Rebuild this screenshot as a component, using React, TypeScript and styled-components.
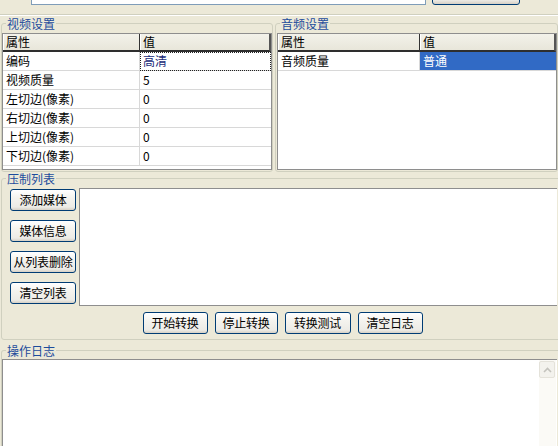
import React from "react";
import styled, { createGlobalStyle } from "styled-components";

const Global = createGlobalStyle`
  html, body {
    margin: 0;
    padding: 0;
    background: #ece9d8;
  }
  body {
    font-family: "Noto Sans CJK SC", "DejaVu Sans", sans-serif;
    font-size: 12px;
    color: #000;
  }
`;

const Window = styled.div`
  width: 558px;
  height: 446px;
  overflow: hidden;
  background: #ece9d8;
  display: flex;
  flex-direction: column;
  padding-left: 1px;
  box-sizing: border-box;

  & > * {
    flex-shrink: 0;
  }
`;

const TopStrip = styled.div`
  height: 5px;
  overflow: hidden;
  display: flex;
  align-items: flex-end;
  gap: 6px;
  padding-left: 30px;
`;

const PathInput = styled.div`
  width: 395px;
  height: 20px;
  flex: none;
  background: #fff;
  border: 1px solid #7f9db9;
  box-sizing: border-box;
`;

const BrowseButton = styled.div`
  width: 88px;
  height: 22px;
  flex: none;
  border: 1px solid #003c74;
  border-radius: 3px;
  box-sizing: border-box;
  background: linear-gradient(#fff, #ecebe6 80%, #d6d0c5);
`;

const Separator = styled.div`
  margin: 9px 0 0 -1px;
  height: 0;
  border-top: 1px solid #d0d0bf;
  border-bottom: 1px solid #fff;
`;

const SettingsRow = styled.div`
  display: grid;
  grid-template-columns: 272px 283px;
  gap: 2px;
  margin-top: 1px;
`;

const Group = styled.fieldset<{ $bleed?: boolean }>`
  margin: 0 ${(p) => (p.$bleed ? "-4px" : "0")} 0 0;
  padding: 0 ${(p) => (p.$bleed ? "4px" : "0")} 1px 0;
  min-width: 0;
  border: 1px solid #d0d0bf;
  border-radius: 3px;
  box-sizing: border-box;
`;

const Legend = styled.legend`
  margin-left: 4px;
  padding: 0 1px;
  font-size: 12px;
  line-height: 13px;
  height: 13px;
  color: #1d4c9c;
`;

const PropTable = styled.div<{ $first: number; $gapLeft?: number }>`
  margin: 3px 0 0 ${(p) => p.$gapLeft ?? 0}px;
  height: 137px;
  background: #fff;
  border: 1px solid #8e8e8e;
  box-sizing: border-box;
  display: grid;
  grid-template-columns: ${(p) => p.$first}px 1fr;
  grid-auto-rows: 19px;
  grid-template-rows: 18px;
  align-content: start;
`;

const HeadCell = styled.div<{ $last?: boolean }>`
  background: linear-gradient(#f3f2ea, #e8e6da);
  border-bottom: 2px solid #2e2e2e;
  border-right: ${(p) => (p.$last ? "2px solid #555" : "1px solid #333")};
  box-shadow: inset 1px 0 #fff;
  line-height: 16px;
  padding-left: 3px;
  font-size: 12px;
  overflow: hidden;
`;

const Cell = styled.div<{ $variant?: "focus" | "selected"; $last?: boolean }>`
  border-bottom: 1px solid #d8d8d8;
  border-right: ${(p) => (p.$last ? "none" : "1px solid #d8d8d8")};
  line-height: 18px;
  padding-left: 3px;
  font-size: 12px;
  white-space: nowrap;
  overflow: hidden;
  box-sizing: border-box;
  color: ${(p) =>
    p.$variant === "selected" ? "#fff" : p.$variant === "focus" ? "#1b2c78" : "#000"};
  background: ${(p) => (p.$variant === "selected" ? "#316ac5" : "transparent")};
  outline: ${(p) => (p.$variant === "focus" ? "1px dotted #222" : "none")};
  outline-offset: -1px;
`;

const ListGroupBody = styled.div`
  display: grid;
  grid-template-columns: 66px 1fr;
  gap: 3px;
  padding: 3px 0 0 8px;
`;

const ButtonColumn = styled.div`
  display: flex;
  flex-direction: column;
  gap: 9px;
  padding-top: 1px;
`;

const Button = styled.button<{ $w?: number }>`
  width: ${(p) => p.$w ?? 66}px;
  height: 22px;
  padding: 0;
  border: 1px solid #003c74;
  border-radius: 3px;
  background: linear-gradient(#ffffff, #f4f3ee 40%, #ecebe6 85%, #d6d0c5);
  font-family: "Noto Sans CJK SC", "DejaVu Sans", sans-serif;
  font-size: 12px;
  color: #000;
  line-height: 20px;
  white-space: nowrap;
  letter-spacing: -0.2px;
`;

const MediaList = styled.div`
  height: 118px;
  background: #fff;
  border: 1px solid #8e8e8e;
  border-right: none;
  box-sizing: border-box;
`;

const ActionRow = styled.div`
  display: flex;
  justify-content: center;
  gap: 7px;
  padding: 6px 0 4px 6px;
`;

const LogGroup = styled(Group)`
  margin-top: 4px;
  padding-bottom: 0;
  border-bottom: none;
`;

const LogBox = styled.div`
  margin-top: 2px;
  height: 90px;
  background: #fff;
  border: 1px solid #8e8e8e;
  border-right: none;
  box-sizing: border-box;
  display: flex;
  justify-content: flex-end;
`;

const ScrollTrack = styled.div`
  width: 17px;
  margin-right: 1px;
  background: #fbfaf6;
  padding-top: 1px;
`;

const ScrollUp = styled.div`
  width: 16px;
  height: 17px;
  border: 1px solid #e4e2da;
  border-radius: 2px;
  background: #f3f2ed;
  box-sizing: border-box;
  display: flex;
  align-items: center;
  justify-content: center;
`;

const videoRows: [string, string, ("focus" | undefined)?][] = [
  ["编码", "高清", "focus"],
  ["视频质量", "5"],
  ["左切边(像素)", "0"],
  ["右切边(像素)", "0"],
  ["上切边(像素)", "0"],
  ["下切边(像素)", "0"],
];

export default function App() {
  return (
    <>
      <Global />
      <Window>
        <TopStrip>
          <PathInput />
          <BrowseButton />
        </TopStrip>
        <Separator />

        <SettingsRow>
          <Group>
            <Legend>视频设置</Legend>
            <PropTable $first={137}>
              <HeadCell>属性</HeadCell>
              <HeadCell $last>值</HeadCell>
              {videoRows.map(([k, v, variant]) => (
                <React.Fragment key={k}>
                  <Cell>{k}</Cell>
                  <Cell $last $variant={variant}>
                    {v}
                  </Cell>
                </React.Fragment>
              ))}
            </PropTable>
          </Group>
          <Group>
            <Legend>音频设置</Legend>
            <PropTable $first={142} $gapLeft={1}>
              <HeadCell>属性</HeadCell>
              <HeadCell $last>值</HeadCell>
              <Cell>音频质量</Cell>
              <Cell $last $variant="selected">
                普通
              </Cell>
            </PropTable>
          </Group>
        </SettingsRow>

        <Group $bleed>
          <Legend>压制列表</Legend>
          <ListGroupBody>
            <ButtonColumn>
              <Button>添加媒体</Button>
              <Button>媒体信息</Button>
              <Button>从列表删除</Button>
              <Button>清空列表</Button>
            </ButtonColumn>
            <MediaList />
          </ListGroupBody>
          <ActionRow>
            <Button $w={65}>开始转换</Button>
            <Button $w={63}>停止转换</Button>
            <Button $w={66}>转换测试</Button>
            <Button $w={65}>清空日志</Button>
          </ActionRow>
        </Group>

        <LogGroup $bleed>
          <Legend>操作日志</Legend>
          <LogBox>
            <ScrollTrack>
              <ScrollUp>
                <svg width="9" height="6" viewBox="0 0 9 6">
                  <path d="M1 5 L4.5 1.5 L8 5" fill="none" stroke="#c4c3bd" strokeWidth="1.6" />
                </svg>
              </ScrollUp>
            </ScrollTrack>
          </LogBox>
        </LogGroup>
      </Window>
    </>
  );
}
